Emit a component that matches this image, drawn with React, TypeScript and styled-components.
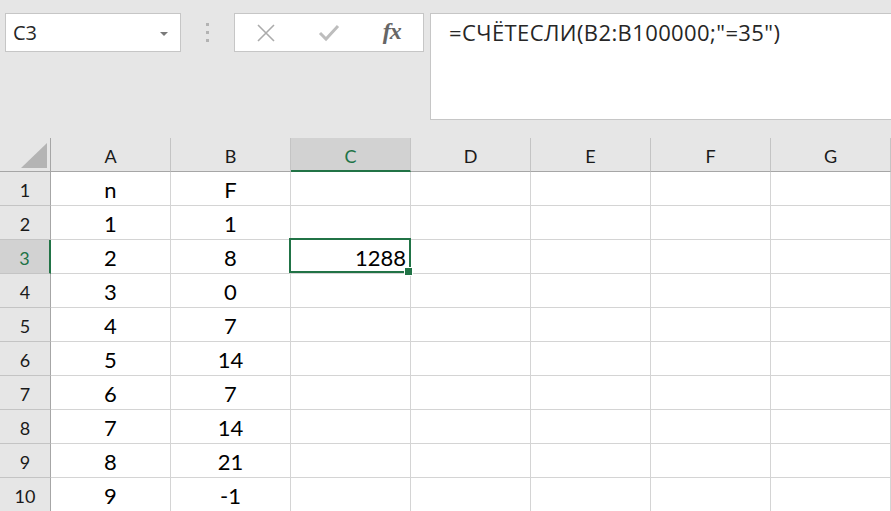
import React from 'react';
import styled, { createGlobalStyle, css } from 'styled-components';

const GlobalStyle = createGlobalStyle`
    html, body {
        margin: 0;
        padding: 0;
        background: #ffffff;
        overflow: hidden;
    }
    * {
        box-sizing: border-box;
    }
`

const green = '#217346';

const Toolbar = styled.div`
    display: flex;
    align-items: flex-start;
    height: 138px;
    padding: 13px 0 0 5px;
    background: #e6e6e6;
    font-family: "Open Sans", "Noto Sans", sans-serif;
    color: #262626;
`

const NameBox = styled.div`
    display: flex;
    align-items: center;
    justify-content: space-between;
    width: 176px;
    height: 39px;
    padding: 0 12px 0 7px;
    background: #ffffff;
    border: 1px solid #c6c6c6;
    font-size: 20px;
`

const DropArrow = styled.span`
    width: 0;
    height: 0;
    border-left: 4px solid transparent;
    border-right: 4px solid transparent;
    border-top: 4px solid #7a7a7a;
    margin-top: 2px;
`

const Grip = styled.div`
    display: flex;
    flex-direction: column;
    align-items: center;
    gap: 5px;
    width: 53px;
    padding-top: 10px;

    span {
        width: 3px;
        height: 3px;
        background: #b3b3b3;
    }
`

const ButtonBox = styled.div`
    display: flex;
    align-items: center;
    width: 190px;
    height: 39px;
    background: #ffffff;
    border: 1px solid #c6c6c6;
`

const ToolButton = styled.div`
    display: flex;
    align-items: center;
    justify-content: center;
    width: 63px;
    height: 100%;
`

const Fx = styled.span`
    font-family: "Liberation Serif", "DejaVu Serif", serif;
    font-style: italic;
    font-weight: 600;
    font-size: 24px;
    color: #666666;
    letter-spacing: -1px;
    margin-top: -3px;
`

const FormulaBox = styled.div`
    flex: 1;
    height: 107px;
    margin-left: 6px;
    padding: 3px 0 0 18px;
    background: #ffffff;
    border: 1px solid #c6c6c6;
    border-right: none;
    font-size: 22px;
    letter-spacing: 0.4px;
    white-space: nowrap;
`

const Sheet = styled.div`
    display: grid;
    grid-template-columns: 51px repeat(8, 120px);
    grid-auto-rows: 34px;
    font-family: "Lato", "Liberation Sans", sans-serif;
`

const Corner = styled.div`
    display: flex;
    align-items: flex-end;
    justify-content: flex-end;
    padding: 0 3px 3px 0;
    background: #e6e6e6;
    border-right: 1px solid #a6a6a6;
    border-bottom: 1px solid #a6a6a6;

    &::before {
        content: '';
        width: 0;
        height: 0;
        border-left: 26px solid transparent;
        border-bottom: 25px solid #b4b4b4;
    }
`

const ColHeader = styled.div<{ $active?: boolean }>`
    display: flex;
    align-items: center;
    justify-content: center;
    padding-top: 3px;
    background: ${(p) => (p.$active ? '#d2d2d2' : '#e6e6e6')};
    color: ${(p) => (p.$active ? green : '#1a1a1a')};
    border-right: 1px solid #c4c4c4;
    border-bottom: ${(p) => (p.$active ? `2px solid ${green}` : '1px solid #a6a6a6')};
    font-size: 18px;
`

const RowHeader = styled.div<{ $active?: boolean }>`
    display: flex;
    align-items: center;
    justify-content: center;
    padding-top: 2px;
    background: ${(p) => (p.$active ? '#d2d2d2' : '#e6e6e6')};
    color: ${(p) => (p.$active ? green : '#1a1a1a')};
    border-right: ${(p) => (p.$active ? `2px solid ${green}` : '1px solid #a6a6a6')};
    border-bottom: 1px solid #c4c4c4;
    font-size: 18px;
`

const Cell = styled.div<{ $align?: 'center' | 'right'; $selected?: boolean }>`
    position: relative;
    display: flex;
    align-items: center;
    justify-content: ${(p) => (p.$align === 'right' ? 'flex-end' : 'center')};
    padding: 2px 4px 0 4px;
    border-right: 1px solid #d4d4d4;
    border-bottom: 1px solid #d4d4d4;
    font-size: 22px;
    color: #000000;

    ${(p) =>
        p.$selected &&
        css`
            z-index: 1;

            &::before {
                content: '';
                position: absolute;
                top: -2px;
                left: -2px;
                right: -1px;
                bottom: 0;
                border: 2px solid ${green};
            }

            &::after {
                content: '';
                position: absolute;
                right: -3px;
                bottom: -3px;
                width: 7px;
                height: 7px;
                background: ${green};
                border: 1px solid #ffffff;
            }
        `}
`

// the last column only peeks in at the right edge, so it carries no label
const columns = ['A', 'B', 'C', 'D', 'E', 'F', 'G', ''];

const data: string[][] = [
    ['n', 'F'],
    ['1', '1'],
    ['2', '8', '1288'],
    ['3', '0'],
    ['4', '7'],
    ['5', '14'],
    ['6', '7'],
    ['7', '14'],
    ['8', '21'],
    ['9', '-1'],
];

const activeRow = 2;
const activeCol = 2;

const CrossIcon = () => (
    <svg width="20" height="20" viewBox="0 0 20 20">
        <path d="M2 2 L18 18 M18 2 L2 18" stroke="#ababab" strokeWidth="1.6" fill="none" />
    </svg>
)

const CheckIcon = () => (
    <svg width="22" height="20" viewBox="0 0 22 20">
        <path d="M2 10 L8 16 L20 3" stroke="#bdbdbd" strokeWidth="3" fill="none" />
    </svg>
)

export default function App() {
    return (
        <>
            <GlobalStyle />
            <Toolbar>
                <NameBox>
                    <span>C3</span>
                    <DropArrow />
                </NameBox>
                <Grip>
                    <span />
                    <span />
                    <span />
                </Grip>
                <ButtonBox>
                    <ToolButton><CrossIcon /></ToolButton>
                    <ToolButton><CheckIcon /></ToolButton>
                    <ToolButton><Fx>fx</Fx></ToolButton>
                </ButtonBox>
                <FormulaBox>=СЧЁТЕСЛИ(B2:B100000;"=35")</FormulaBox>
            </Toolbar>
            <Sheet>
                <Corner />
                {columns.map((c, i) => (
                    <ColHeader key={i} $active={i === activeCol}>{c}</ColHeader>
                ))}
                {data.map((row, r) => (
                    <React.Fragment key={r}>
                        <RowHeader $active={r === activeRow}>{r + 1}</RowHeader>
                        {columns.map((_, i) => {
                            const selected = r === activeRow && i === activeCol;
                            return (
                                <Cell key={i} $selected={selected} $align={selected ? 'right' : 'center'}>
                                    {row[i] ?? ''}
                                </Cell>
                            );
                        })}
                    </React.Fragment>
                ))}
            </Sheet>
        </>
    );
}
